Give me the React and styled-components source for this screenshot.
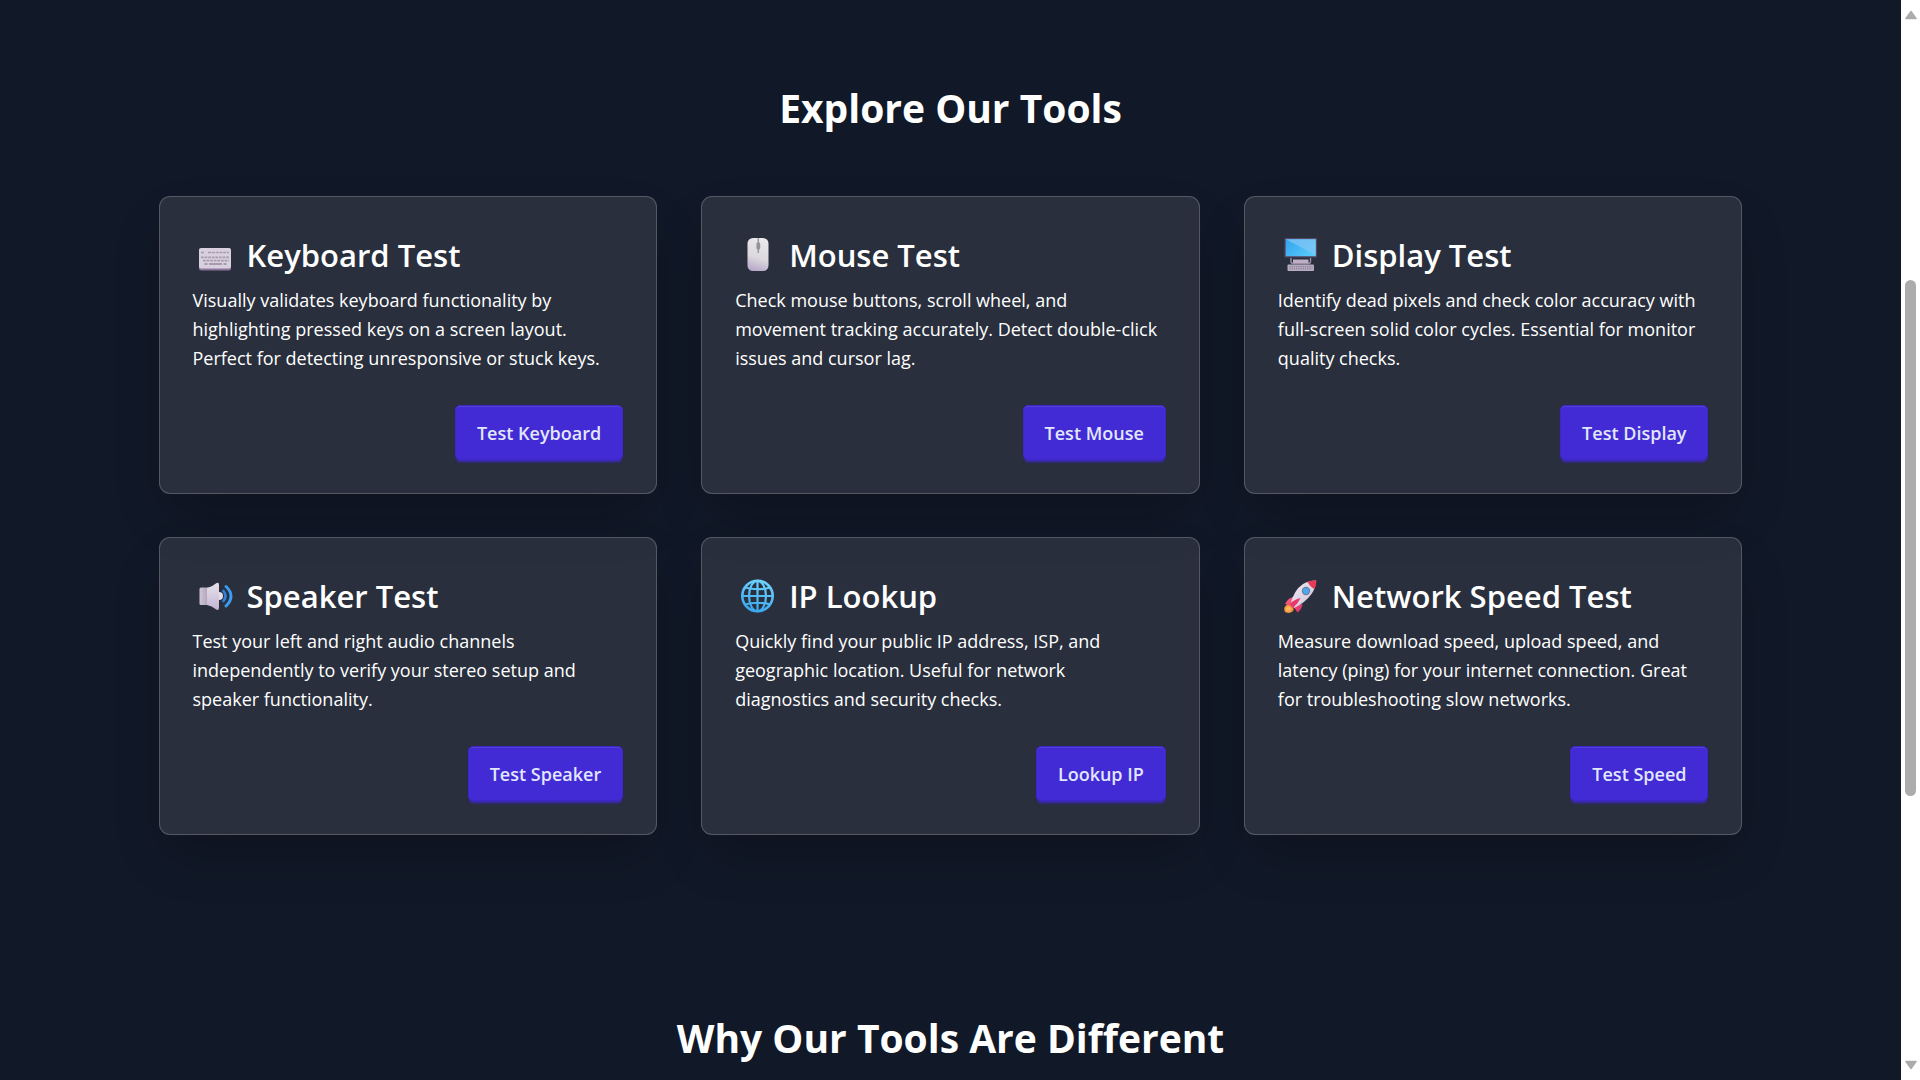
import React from "react";
import styled, { createGlobalStyle } from "styled-components";

const GlobalStyle = createGlobalStyle`
  *, *::before, *::after { box-sizing: border-box; }
  body {
    margin: 0;
    background: #111827;
    color: #fff;
    font-family: "Segoe UI", "Open Sans", "Noto Sans", sans-serif;
  }
`;

const Frame = styled.div`
  display: flex;
  height: 100vh;
  overflow: hidden;
`;

const Page = styled.main`
  flex: 1;
  min-width: 0;
  overflow: hidden;
  background: #111827;
`;

const Section = styled.section`
  padding: 84px 32px 95px;
`;

const Heading = styled.h2`
  margin: 0 0 64px;
  font-size: 39px;
  line-height: 48px;
  font-weight: 700;
  text-align: center;
`;

const Grid = styled.div`
  display: grid;
  grid-template-columns: repeat(3, minmax(0, 1fr));
  gap: 43px 44px;
  max-width: 1584px;
  margin: 0 auto;
`;

const Card = styled.article`
  display: flex;
  flex-direction: column;
  padding: 33px;
  border: 1px solid rgba(255, 255, 255, 0.2);
  border-radius: 11px;
  background: rgba(255, 255, 255, 0.1);
  box-shadow: 0 25px 50px -12px rgba(0, 0, 0, 0.25);
`;

const CardTitle = styled.h3`
  display: flex;
  align-items: center;
  gap: 4px;
  margin: 0 0 6px;
  font-size: 31px;
  line-height: 50px;
  font-weight: 600;
  white-space: nowrap;
`;

const Icon = styled.svg`
  flex: none;
  width: 50px;
  height: 50px;
`;

const CardText = styled.p`
  margin: 0 0 32px;
  font-size: 18px;
  line-height: 29px;
  white-space: pre-line;
`;

const Action = styled.button`
  align-self: flex-end;
  height: 55px;
  margin-top: auto;
  padding: 0 21px;
  border: 1px solid #3d27c9;
  border-radius: 5px;
  background: #422ad5;
  box-shadow: inset 0 1px 0 rgba(255, 255, 255, 0.1), 0 3px 3px -2px #422ad5,
    0 4px 3px -2px rgba(66, 42, 213, 0.5);
  color: #e0e7ff;
  font: inherit;
  font-size: 18px;
  font-weight: 600;
  cursor: pointer;
`;

const Scrollbar = styled.div`
  display: flex;
  flex: none;
  flex-direction: column;
  align-items: center;
  width: 19px;
  padding: 10px 0;
  background: #fff;
`;

const Arrow = styled.svg`
  flex: none;
  width: 12px;
  height: 10px;
`;

const Track = styled.div`
  display: grid;
  flex: 1;
  grid-template-rows: 260fr 516fr 264fr;
`;

const Thumb = styled.div`
  grid-row: 2;
  width: 11px;
  border-radius: 6px;
  background: #acacac;
`;

const KeyboardIcon = () => (
  <Icon viewBox="1 0 50 50" aria-hidden="true">
    <rect x="7" y="19" width="32" height="21.6" rx="2" fill="#8b759c" />
    <rect x="7" y="18" width="32" height="20.6" rx="2" fill="#d9d0df" />
    <g stroke="#a59bab" strokeWidth="1.7">
      <path d="M9 22.5h3M16 22.5h21" strokeDasharray="3 .8" />
      <path d="M9 27.4h28M11 30.6h26" strokeDasharray="2.7 .9" />
      <path d="M12.5 34h3M17 34h13M31.5 34h3" strokeWidth="2" />
    </g>
  </Icon>
);

const MouseIcon = () => (
  <Icon viewBox="0 0 50 50" aria-hidden="true">
    <defs>
      <linearGradient id="mouseBody" x1=".6" y1="0" x2=".4" y2="1">
        <stop offset="0" stopColor="#e9e8ea" />
        <stop offset=".6" stopColor="#dcd8de" />
        <stop offset="1" stopColor="#b9a8ca" />
      </linearGradient>
    </defs>
    <rect x="12.5" y="8" width="21" height="33" rx="5.5" fill="url(#mouseBody)" />
    <path d="M23.3 8v15" stroke="#9c999e" strokeWidth="1.5" />
    <rect x="21.4" y="12.3" width="3.8" height="7.5" rx="1.8" fill="#949197" />
  </Icon>
);

const DisplayIcon = () => (
  <Icon viewBox="0 0 50 50" aria-hidden="true">
    <defs>
      <linearGradient id="screen" x1="0" y1=".2" x2="1" y2=".8">
        <stop offset="0" stopColor="#35a5ef" />
        <stop offset="1" stopColor="#5bcdf9" />
      </linearGradient>
    </defs>
    <rect x="6.5" y="8" width="32.5" height="19.5" rx=".8" fill="#554964" />
    <rect x="7.7" y="9.2" width="30" height="17" fill="url(#screen)" />
    <path d="M7.7 9.2h30V25z" fill="#82c5f5" opacity=".75" />
    <path d="M13 28v3.5q0 2 2 2h15.5q2 0 2-2V28" fill="none" stroke="#9f92a8" strokeWidth="1.4" />
    <rect x="15" y="29.5" width="15.5" height="3.5" fill="#bdafc5" />
    <rect x="9.5" y="34.5" width="26.5" height="6.5" rx="1" fill="#b7abc0" />
    <path d="M11.5 36.7h23M11.5 38.8h23" stroke="#80748b" strokeDasharray="1.2 1" />
  </Icon>
);

const SpeakerIcon = () => (
  <Icon viewBox="0 0 50 50" aria-hidden="true">
    <defs>
      <linearGradient id="cone" x1="0" y1="0" x2="0" y2="1">
        <stop offset="0" stopColor="#e7e2ea" />
        <stop offset="1" stopColor="#c5b4d3" />
      </linearGradient>
      <linearGradient id="box" x1="0" y1="0" x2="1" y2="0">
        <stop offset="0" stopColor="#cfc6d5" />
        <stop offset="1" stopColor="#a99eb2" />
      </linearGradient>
    </defs>
    <rect x="6.5" y="16.5" width="10" height="17.5" rx="1.5" fill="url(#box)" />
    <circle cx="26" cy="25" r="4" fill="#e3dde7" />
    <path d="M14 17q5-1 8.500-4.300Q26 10.300 26 14v22.500q0 4-3.500 1.500Q19 34.800 14 34z" fill="url(#cone)" />
    <path d="M30.500 20q4 5 0 10" fill="none" stroke="#2f82d8" strokeWidth="2.800" strokeLinecap="round" />
    <path d="M33 15.500q10 9.500 0 19.500" fill="none" stroke="#3d9bf0" strokeWidth="3" strokeLinecap="round" />
  </Icon>
);

const GlobeIcon = () => (
  <Icon viewBox="0 0 50 50" aria-hidden="true">
    <defs>
      <linearGradient id="globe" gradientUnits="userSpaceOnUse" x1="28" y1="9" x2="18" y2="41">
        <stop offset="0" stopColor="#6fd3ff" />
        <stop offset="1" stopColor="#38a6ee" />
      </linearGradient>
    </defs>
    <g fill="none" stroke="url(#globe)" strokeWidth="2.200">
      <circle cx="22.500" cy="25" r="15.200" strokeWidth="2.600" />
      <ellipse cx="22.500" cy="25" rx="8.500" ry="15.200" />
      <path d="M22.500 10l.01 30M7.500 25l30 .01M10 16.500q12.500 3.500 25 0M10 33.500q12.500-3.500 25 0" />
    </g>
  </Icon>
);

const RocketIcon = () => (
  <Icon viewBox="1 0 50 50" aria-hidden="true">
    <defs>
      <linearGradient id="hull" x1="0" y1="0" x2="1" y2="1">
        <stop offset="0" stopColor="#f1edf3" />
        <stop offset="1" stopColor="#cdbfd8" />
      </linearGradient>
      <linearGradient id="fin" x1="0" y1="0" x2="1" y2="1">
        <stop offset="0" stopColor="#ff6482" />
        <stop offset="1" stopColor="#e02d68" />
      </linearGradient>
    </defs>
    <path d="M8 41q-2-4 1-6.500 3-2.500 6 .5t.5 5.500Q12.500 43 8 41z" fill="#f5923a" />
    <path d="M9 40q-1-3 1-4t3.500.5T13 40q-2 1-4 0z" fill="#ffb65c" />
    <path d="M16.500 26q-5 .5-8.500 7l7 2zM25.500 33q-.5 5-5 8.500l-4-6z" fill="url(#fin)" />
    <path d="M13.500 33Q17 19 26 13q6-3.500 13-3.500 0 7-4.500 13.500Q28 32 17 37z" fill="url(#hull)" />
    <path d="M30.500 10.800Q35 9 39.500 9.500q0 4-2 8.500-4.500-2-7-7.200z" fill="#e83a57" />
    <path d="M13 32.500q5-4.500 10.500-5.500-2 5-7.500 10-2.500-1-3-4.500z" fill="#e9386c" />
    <circle cx="29" cy="20" r="4.200" fill="#6d7f99" />
    <circle cx="29" cy="20" r="3" fill="#4aa9f3" />
  </Icon>
);

const tools = [
  {
    icon: KeyboardIcon,
    title: "Keyboard Test",
    text: "Visually validates keyboard functionality by\nhighlighting pressed keys on a screen layout.\nPerfect for detecting unresponsive or stuck keys.",
    action: "Test Keyboard",
  },
  {
    icon: MouseIcon,
    title: "Mouse Test",
    text: "Check mouse buttons, scroll wheel, and\nmovement tracking accurately. Detect double-click\nissues and cursor lag.",
    action: "Test Mouse",
  },
  {
    icon: DisplayIcon,
    title: "Display Test",
    text: "Identify dead pixels and check color accuracy with\nfull-screen solid color cycles. Essential for monitor\nquality checks.",
    action: "Test Display",
  },
  {
    icon: SpeakerIcon,
    title: "Speaker Test",
    text: "Test your left and right audio channels\nindependently to verify your stereo setup and\nspeaker functionality.",
    action: "Test Speaker",
  },
  {
    icon: GlobeIcon,
    title: "IP Lookup",
    text: "Quickly find your public IP address, ISP, and\ngeographic location. Useful for network\ndiagnostics and security checks.",
    action: "Lookup IP",
  },
  {
    icon: RocketIcon,
    title: "Network Speed Test",
    text: "Measure download speed, upload speed, and\nlatency (ping) for your internet connection. Great\nfor troubleshooting slow networks.",
    action: "Test Speed",
  },
];

export default function App() {
  return (
    <>
      <GlobalStyle />
      <Frame>
        <Page>
          <Section>
            <Heading>Explore Our Tools</Heading>
            <Grid>
              {tools.map(({ icon: ToolIcon, title, text, action }) => (
                <Card key={title}>
                  <CardTitle>
                    <ToolIcon />
                    {title}
                  </CardTitle>
                  <CardText>{text}</CardText>
                  <Action type="button">{action}</Action>
                </Card>
              ))}
            </Grid>
          </Section>
          <Section>
            <Heading>Why Our Tools Are Different</Heading>
          </Section>
        </Page>
        <Scrollbar aria-hidden="true">
          <Arrow viewBox="0 0 12 10">
            <path d="M6 1.500l5 7H1z" fill="#acacac" stroke="#acacac" strokeWidth="1.500" strokeLinejoin="round" />
          </Arrow>
          <Track>
            <Thumb />
          </Track>
          <Arrow viewBox="0 0 12 10">
            <path d="M6 8.500l5-7H1z" fill="#acacac" stroke="#acacac" strokeWidth="1.500" strokeLinejoin="round" />
          </Arrow>
        </Scrollbar>
      </Frame>
    </>
  );
}
